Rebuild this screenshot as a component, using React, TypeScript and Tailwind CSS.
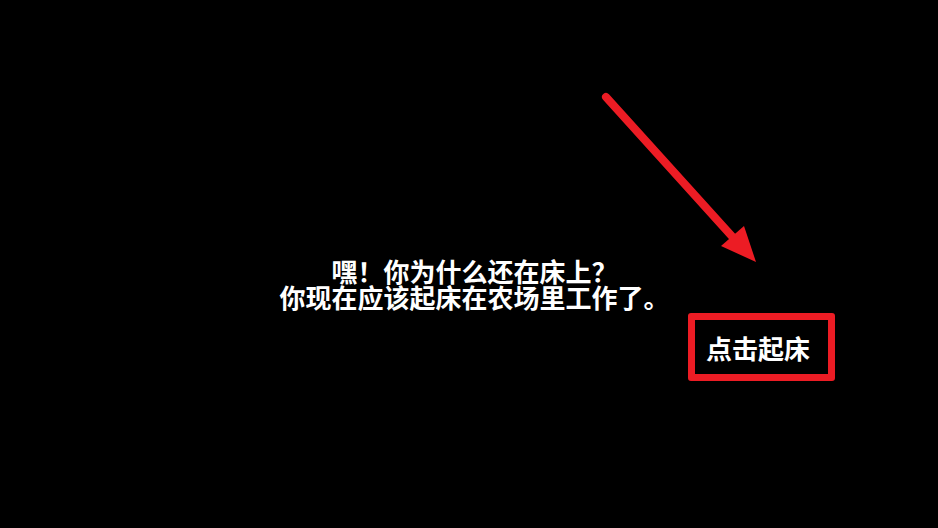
import React from 'react';

const cjk = '"Noto Sans CJK SC", "Noto Sans", sans-serif';

// Red pointer arrow aimed at the wake-up button
const PointerArrow = () => (
  <svg className="absolute left-0 top-0" width="938" height="528" viewBox="0 0 938 528">
    <line x1="606" y1="97" x2="738" y2="243" stroke="#ec1c24" strokeWidth="8" strokeLinecap="round" />
    <polygon points="721,246 744,226 756,262" fill="#ec1c24" />
  </svg>
);

const App = () => {
  return (
    <div className="relative flex h-[528px] w-full flex-col bg-black pt-[258px]" style={{ fontFamily: cjk }}>
      <PointerArrow />
      <div className="pl-[11px] text-center text-[26px] font-bold leading-[26px] text-white">
        <p>嘿！你为什么还在床上？</p>
        <p>你现在应该起床在农场里工作了。</p>
      </div>
      <button className="mr-[103px] mt-[3px] flex h-[68px] w-[147px] items-center self-end rounded-[3px] border-[7px] border-[#ec1c24] pl-[11px] text-[26px] font-bold text-white">
        点击起床
      </button>
    </div>
  );
};

export default App;
